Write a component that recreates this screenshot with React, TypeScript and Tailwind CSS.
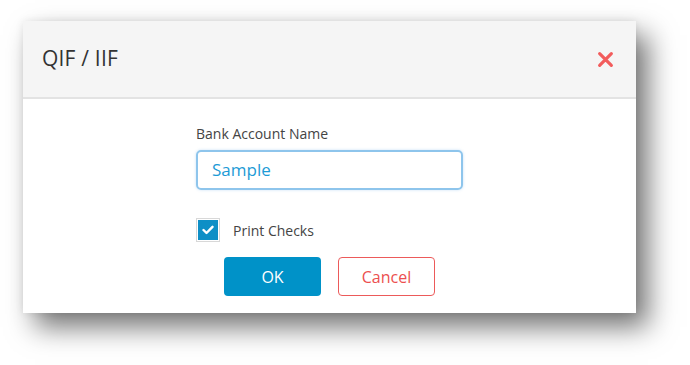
export default function App() {
  return (
    <div className="w-[690px] h-[365px] bg-white pt-[21px] pl-[23px] font-['Open_Sans',sans-serif]">
      <div className="w-[613px] h-[292px] bg-white shadow-[12px_14px_26px_rgba(0,0,0,0.55),0_0_8px_rgba(0,0,0,0.08)] flex flex-col">
        <div className="h-[78px] bg-[#f5f5f5] border-b-2 border-[#e3e3e3] flex items-center justify-between pl-[19px] pr-[22px] shrink-0">
          <h2 className="text-[21px] text-[#333] tracking-[0.2px]">QIF / IIF</h2>
          <svg width="17" height="17" viewBox="0 0 16 16" className="mt-[1px]">
            <path d="M2.5 2.5 L13.5 13.5 M13.5 2.5 L2.5 13.5" stroke="#f25c5c" strokeWidth="3" strokeLinecap="round" />
          </svg>
        </div>
        <div className="flex flex-col items-center pt-[25px]">
          <div className="w-[267px] flex flex-col">
            <label className="text-[14px] text-[#444] leading-[20px]">Bank Account Name</label>
            <div className="mt-[6px] h-[40px] rounded-[5px] border-2 border-[#8ec5ec] shadow-[0_0_3px_rgba(100,170,230,0.35)] flex items-center pl-[14px]">
              <span className="text-[17px] text-[#1d9bd6]">Sample</span>
            </div>
            <div className="mt-[28px] flex items-center gap-[13px]">
              <div className="w-[24px] h-[24px] border border-[#d8d8d8] p-[1px]">
                <div className="w-full h-full bg-[#0e8fc6] flex items-center justify-center">
                  <svg width="12" height="10" viewBox="0 0 12 10">
                    <path d="M1.5 5 L4.5 8 L10.5 1.8" stroke="white" strokeWidth="2.4" fill="none" strokeLinecap="round" strokeLinejoin="round" />
                  </svg>
                </div>
              </div>
              <span className="text-[14px] text-[#444]">Print Checks</span>
            </div>
          </div>
          <div className="mt-[15px] flex gap-[17px]">
            <button className="w-[97px] h-[39px] rounded-[4px] bg-[#0092c8] text-white text-[16px]">OK</button>
            <button className="w-[97px] h-[39px] rounded-[4px] border border-[#ec5a5a] bg-white text-[#ec4f4f] text-[16px]">Cancel</button>
          </div>
        </div>
      </div>
    </div>
  );
}
